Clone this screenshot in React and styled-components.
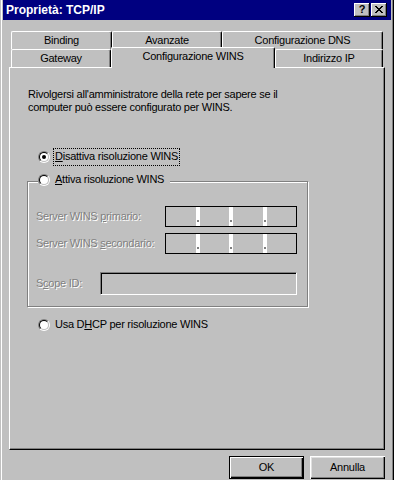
import React from 'react';
import styled, { createGlobalStyle } from 'styled-components';

const GlobalStyle = createGlobalStyle`
  html, body { margin: 0; padding: 0; background: #c0c0c0; }
  body {
    font-family: "Liberation Sans", Arial, sans-serif;
    font-size: 11px;
    line-height: 13px;
    letter-spacing: -0.25px;
    color: #000;
  }
  * { box-sizing: border-box; }
`;

const Window = styled.div`
  width: 394px;
  height: 480px;
  overflow: hidden;
  background: #c0c0c0;
  padding: 0 2px 0 3px;
  border-right: 1px solid #000;
  box-shadow: inset 1px 0 #c0c0c0, inset 2px 0 #fff, inset -1px 0 #808080;
`;

const TitleBar = styled.div`
  height: 20px;
  background: #000080;
  display: flex;
  align-items: flex-start;
`;

const TitleText = styled.div`
  color: #fff;
  font-weight: bold;
  font-size: 12px;
  letter-spacing: 0;
  padding: 4px 0 0 3px;
  white-space: nowrap;
`;

const CaptionButtons = styled.div`
  margin-left: auto;
  display: flex;
  gap: 1px;
  padding: 3px 4px 0 0;
`;

const CaptionButton = styled.div`
  width: 16px;
  height: 14px;
  background: #c0c0c0;
  box-shadow: inset -1px -1px #000, inset 1px 1px #fff, inset -2px -2px #808080;
  display: flex;
  align-items: center;
  justify-content: center;
  font-weight: bold;
  font-size: 11px;
  letter-spacing: 0;
  line-height: 1;
  padding-bottom: 1px;
`;

const Content = styled.div`
  padding: 11px 6px 0 6px;
`;

const TabRow = styled.div`
  display: flex;
  height: 18px;
  padding-left: 2px;
`;

const Tab = styled.div`
  width: ${p => p.$w}px;
  height: 18px;
  flex: none;
  background: #c0c0c0;
  border-top: 1px solid #fff;
  border-left: 1px solid #fff;
  border-right: 1px solid #000;
  border-radius: 2px 2px 0 0;
  box-shadow: inset -1px 0 #808080;
  display: flex;
  align-items: center;
  justify-content: center;
  white-space: nowrap;
`;

const ActiveTab = styled(Tab)`
  height: 21px;
  margin-top: -2px;
  margin-bottom: -1px;
  padding-bottom: 3px;
  position: relative;
  z-index: 1;
`;

const Panel = styled.div`
  height: 383px;
  border: 1px solid;
  border-color: #fff #000 #000 #fff;
  box-shadow: inset -1px -1px #808080;
  padding: 20px 0 0 18px;
`;

const Intro = styled.p`
  margin: 0;
  line-height: 13px;
  white-space: nowrap;
`;

const RadioRow = styled.div`
  display: flex;
  align-items: center;
  gap: 3px;
  height: 18px;
  margin: ${p => p.$mt}px 0 0 10px;
`;

const RadioOuter = styled.span`
  width: 12px;
  height: 12px;
  flex: none;
  border-radius: 50%;
  border: 1px solid;
  border-color: #808080 #fff #fff #808080;
  display: flex;
`;

const RadioInner = styled.span`
  flex: 1;
  border-radius: 50%;
  border: 1px solid;
  border-color: #000 #c0c0c0 #c0c0c0 #000;
  background: #fff;
  display: flex;
  align-items: center;
  justify-content: center;
`;

const RadioDot = styled.span`
  width: 4px;
  height: 4px;
  border-radius: 50%;
  background: #000;
`;

const RadioLabel = styled.span`
  border: 1px dotted ${p => (p.$focus ? '#000' : 'transparent')};
  padding: 1px 1px 2px;
  line-height: 13px;
  white-space: nowrap;
`;

const Group = styled.div`
  position: relative;
  width: 281px;
  margin: 15px 0 0 -1px;
  border: 1px solid #808080;
  box-shadow: inset 1px 1px #fff, 1px 1px #fff;
  padding: 24px 0 11px 8px;
  display: flex;
  flex-direction: column;
`;

const GroupTitle = styled.div`
  position: absolute;
  top: -11px;
  left: 10px;
  height: 18px;
  display: flex;
  align-items: center;
  gap: 3px;
  background: #c0c0c0;
  padding-right: 4px;
`;

const FieldRow = styled.div`
  display: flex;
  align-items: center;
  height: ${p => p.$h}px;
  margin-top: ${p => p.$mt || 0}px;
`;

const FieldLabel = styled.span`
  width: ${p => p.$w}px;
  flex: none;
  color: #808080;
  text-shadow: 1px 1px #fff;
  white-space: nowrap;
`;

const IPField = styled.div`
  width: 132px;
  height: 21px;
  border: 1px solid #000;
  background: #fff;
  display: flex;
`;

const IPSegment = styled.div`
  flex: 1;
  background: #c0c0c0;
`;

const IPSep = styled.div`
  width: 4px;
  flex: none;
  display: flex;
  align-items: flex-end;
  padding: 0 0 4px 1px;
`;

const IPDot = styled.span`
  width: 2px;
  height: 2px;
  background: #808080;
`;

const TextField = styled.div`
  width: ${p => p.$w}px;
  height: ${p => p.$h}px;
  border: 1px solid;
  border-color: #808080 #fff #fff #808080;
  box-shadow: inset 1px 1px #000, inset -1px -1px #c0c0c0;
  background: #c0c0c0;
`;

const ButtonRow = styled.div`
  display: flex;
  justify-content: flex-end;
  gap: 6px;
  margin-top: 6px;
`;

const Button = styled.div`
  width: 75px;
  height: 23px;
  background: #c0c0c0;
  display: flex;
  align-items: center;
  justify-content: center;
  ${p =>
    p.$default
      ? `border: 1px solid #000; box-shadow: inset 1px 1px #fff, inset -1px -1px #000, inset -2px -2px #808080;`
      : `box-shadow: inset 1px 1px #fff, inset -1px -1px #000, inset -2px -2px #808080, inset 2px 2px #dfdfdf;`}
`;

const Radio = ({ checked }) => (
  <RadioOuter>
    <RadioInner>{checked && <RadioDot />}</RadioInner>
  </RadioOuter>
);

const IPAddress = () => (
  <IPField>
    <IPSegment />
    <IPSep><IPDot /></IPSep>
    <IPSegment />
    <IPSep><IPDot /></IPSep>
    <IPSegment />
    <IPSep><IPDot /></IPSep>
    <IPSegment />
  </IPField>
);

const CloseGlyph = () => (
  <svg width="8" height="7" viewBox="0 0 8 7" shapeRendering="crispEdges">
    <path
      fill="#000"
      d="M0 0h2v1H0zM6 0h2v1H6zM1 1h2v1H1zM5 1h2v1H5zM2 2h4v1H2zM3 3h2v1H3zM2 4h4v1H2zM1 5h2v1H1zM5 5h2v1H5zM0 6h2v1H0zM6 6h2v1H6z"
    />
  </svg>
);

export default function App() {
  return (
    <>
      <GlobalStyle />
      <Window>
        <TitleBar>
          <TitleText>Proprietà: TCP/IP</TitleText>
          <CaptionButtons>
            <CaptionButton>?</CaptionButton>
            <CaptionButton><CloseGlyph /></CaptionButton>
          </CaptionButtons>
        </TitleBar>
        <Content>
          <TabRow>
            <Tab $w={101}>Binding</Tab>
            <Tab $w={110}>Avanzate</Tab>
            <Tab $w={161}>Configurazione DNS</Tab>
          </TabRow>
          <TabRow>
            <Tab $w={100}>Gateway</Tab>
            <ActiveTab $w={164}>Configurazione WINS</ActiveTab>
            <Tab $w={108}>Indirizzo IP</Tab>
          </TabRow>
          <Panel>
            <Intro>
              Rivolgersi all'amministratore della rete per sapere se il
              <br />
              computer può essere configurato per WINS.
            </Intro>
            <RadioRow $mt={34}>
              <Radio checked />
              <RadioLabel $focus><u>D</u>isattiva risoluzione WINS</RadioLabel>
            </RadioRow>
            <Group>
              <GroupTitle>
                <Radio />
                <RadioLabel><u>A</u>ttiva risoluzione WINS</RadioLabel>
              </GroupTitle>
              <FieldRow $h={21}>
                <FieldLabel $w={129}>Server WINS <u>p</u>rimario:</FieldLabel>
                <IPAddress />
              </FieldRow>
              <FieldRow $h={21} $mt={6}>
                <FieldLabel $w={129}>Server WINS <u>s</u>econdario:</FieldLabel>
                <IPAddress />
              </FieldRow>
              <FieldRow $h={23} $mt={18}>
                <FieldLabel $w={64}>S<u>c</u>ope ID:</FieldLabel>
                <TextField $w={197} $h={23} />
              </FieldRow>
            </Group>
            <RadioRow $mt={9}>
              <Radio />
              <RadioLabel>Usa D<u>H</u>CP per risoluzione WINS</RadioLabel>
            </RadioRow>
          </Panel>
          <ButtonRow>
            <Button $default>OK</Button>
            <Button>Annulla</Button>
          </ButtonRow>
        </Content>
      </Window>
    </>
  );
}
